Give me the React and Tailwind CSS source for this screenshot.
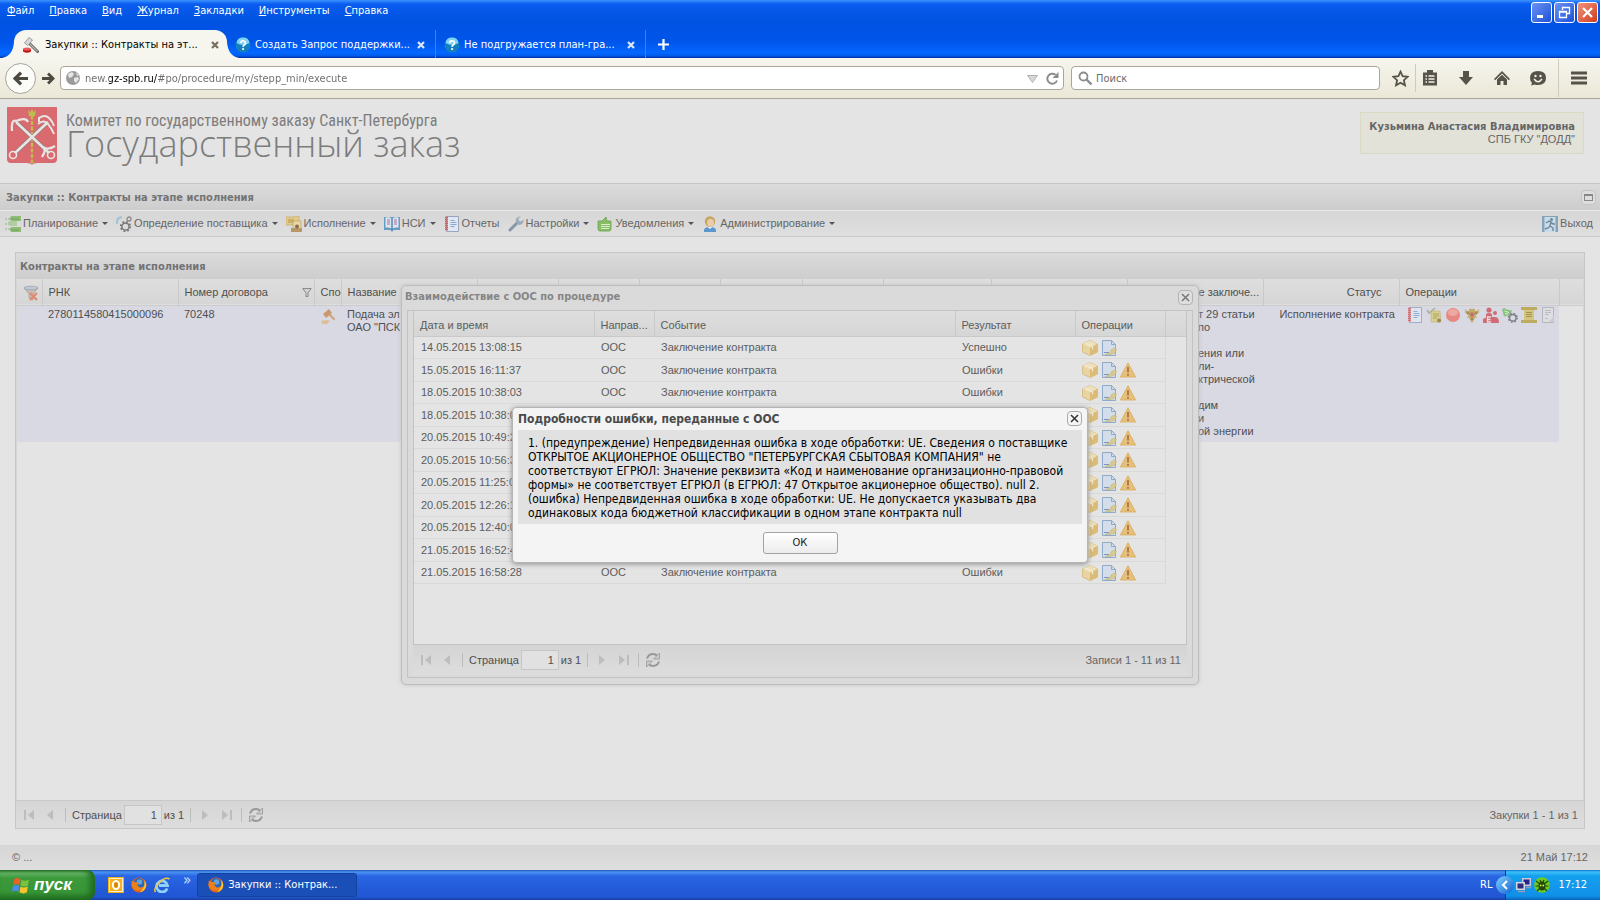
import React, { useState } from 'react'

const browserMenu = ['Файл', 'Правка', 'Вид', 'Журнал', 'Закладки', 'Инструменты', 'Справка']

const events = [
  { date: '14.05.2015 13:08:15', result: 'Успешно' },
  { date: '15.05.2015 16:11:37', result: 'Ошибки' },
  { date: '18.05.2015 10:38:03', result: 'Ошибки' },
  { date: '18.05.2015 10:38:03', result: 'Ошибки' },
  { date: '20.05.2015 10:49:21', result: 'Ошибки' },
  { date: '20.05.2015 10:56:31', result: 'Ошибки' },
  { date: '20.05.2015 11:25:01', result: 'Ошибки' },
  { date: '20.05.2015 12:26:11', result: 'Ошибки' },
  { date: '20.05.2015 12:40:01', result: 'Ошибки' },
  { date: '21.05.2015 16:52:41', result: 'Ошибки' },
  { date: '21.05.2015 16:58:28', result: 'Ошибки' },
]

/* ---------- icons ---------- */

const Icon = ({ size = 'size-4', box = '0 0 16 16', children }) => (
  <svg className={`${size} shrink-0`} viewBox={box} fill="none" aria-hidden="true">
    {children}
  </svg>
)

const HammerIcon = () => (
  <Icon>
    <path d="M7 7l7.500 7.500" stroke="#5f5f5f" strokeWidth="3" strokeLinecap="round" />
    <path d="M7 7l7.500 7.500" stroke="#b8b8b8" strokeWidth="1.200" />
    <path d="M1.500 6l4.500-5.500 3.500 2.500-4.500 5.500z" fill="#d9d9d9" stroke="#8a8a8a" strokeWidth=".8" />
    <path d="M0 12h8v2.500q-4 2.500-8 0z" fill="#c01414" />
    <ellipse cx="4" cy="12" rx="4" ry="1.600" fill="#ec5b5b" />
  </Icon>
)

const HelpBall = () => (
  <Icon>
    <circle cx="8" cy="8" r="7.500" fill="#1480c0" />
    <path d="M1.500 6a6.600 6.600 0 0 1 13 0q-6.500 4-13 0z" fill="#7fd3f5" />
    <path d="M5.800 6q0-2.200 2.300-2.200T10.400 6q0 1.300-1.200 2T8.100 9.800" stroke="#fff" strokeWidth="1.700" />
    <circle cx="8.100" cy="12" r="1.100" fill="#fff" />
  </Icon>
)

const GlobeIcon = () => (
  <Icon>
    <circle cx="8" cy="8" r="7" fill="#9b9b9b" />
    <path d="M3 4l4-2 2 2-2 3-3 1zM9 8l4-1 1 2-3 4-2-2zM11 2l3 3-2 1z" fill="#e6e6e6" />
  </Icon>
)

const FirefoxIcon = () => (
  <Icon>
    <circle cx="8" cy="8" r="7.500" fill="#e4631a" />
    <circle cx="8" cy="6.500" r="5.400" fill="#2a66b8" />
    <circle cx="8.500" cy="5" r="2.800" fill="#5fa3dc" />
    <path d="M.8 3.500q2 1.500 4 1.500l3 1-1.500 2 2 2.200q3 .8 5-1.200-1 4.500-5.500 4.500Q1 13 .5 8z" fill="#ee7f1b" />
    <path d="M13.500 3q2.800 4 1 8-1.500 3.500-5.500 4.200 4-4.200 4.500-7.200z" fill="#f9c733" />
  </Icon>
)

const IeIcon = () => (
  <Icon>
    <path d="M13.200 11.500A5.500 5.500 0 1 1 13.500 8.500H5" stroke="#8fd0ff" strokeWidth="2.800" />
    <path d="M1.500 15Q-1 12.500 5 6T15.500 2" stroke="#f3c63c" strokeWidth="1.500" />
  </Icon>
)

const OutlookIcon = () => (
  <Icon>
    <path d="M0 0h16v16H0z" fill="#f7ae1b" />
    <path d="M1.500 1.500h13v13h-13z" stroke="#fff2c8" />
    <ellipse cx="8" cy="8" rx="3.200" ry="4" stroke="#fff" strokeWidth="2" />
    <ellipse cx="8" cy="8" rx="2" ry="2.800" fill="#d98a00" />
  </Icon>
)

const WindowsFlag = () => (
  <Icon size="size-[19px]" box="0 0 18 18">
    <path d="M3 3q3-2 6 0L8 8.500q-3-2-6 0z" fill="#e8622a" />
    <path d="M10 3.500q3 2 7 0l-1 5.500q-3 2-7 0z" fill="#7cc142" />
    <path d="M1.800 9.500q3-2 6 0L7 15q-3-2-6 0z" fill="#4a8df0" />
    <path d="M9 10q3 2 7 0l-1 5.500q-3 2-7 0z" fill="#f6c52c" />
  </Icon>
)

const PlanIcon = () => (
  <Icon>
    <path d="M0 3h2M3 3h2M0 8h2M3 8h2M0 13h2M3 13h2" stroke="#8fb096" />
    <path d="M5 1l2-1h9v5H7L5 4zM5 12l2-1h9v5H7l-2-1z" fill="#8fbb76" />
    <path d="M3 6l2-1h7v5H5L3 9z" fill="#b1cda2" />
    <path d="M6 14h8M6 3h8" stroke="#72a463" />
  </Icon>
)

const GearsIcon = () => (
  <Icon>
    <path d="M1 8Q0 2 6 1" stroke="#a9c2d3" strokeWidth="2.400" />
    <circle cx="9.500" cy="10.500" r="3.600" stroke="#747474" strokeWidth="1.500" />
    <circle cx="9.500" cy="10.500" r="4.900" stroke="#747474" strokeWidth="1.500" strokeDasharray="1.850 2" />
    <circle cx="13" cy="3" r="2" stroke="#8a8a8a" strokeWidth="1.300" />
  </Icon>
)

const ExecIcon = () => (
  <Icon>
    <path d="M0 1h8l2-1h3v9H0z" fill="#e0cb8f" stroke="#c2a254" strokeWidth=".6" />
    <path d="M2 4h6M2 6h5" stroke="#b99340" />
    <path d="M7 5h8v8H7z" fill="#e6d6a8" stroke="#b79a56" strokeWidth=".6" />
    <path d="M5 12h11v4H5z" fill="#b89868" />
    <circle cx="11" cy="10.500" r="2" fill="#8a6d47" />
  </Icon>
)

const BookIcon = () => (
  <Icon>
    <path d="M0 1h16v13H9.500L8 16l-1.500-2H0z" fill="#679dc4" />
    <path d="M1.500 1.500q4-1 6 1v10q-2-1.500-6-1zM14.500 1.500q-4-1-6 1v10q2-1.500 6-1z" fill="#dfe6ec" />
    <path d="M3 4h3M3 6h3M3 8h3" stroke="#a26fb0" />
    <path d="M10 4h3M10 6h3M10 8h3" stroke="#a26fb0" />
    <path d="M8 2v13" stroke="#4d7fa8" />
  </Icon>
)

const ReportIcon = () => (
  <Icon>
    <path d="M2.500.5h12v15h-12z" fill="#e2e6ee" stroke="#97a6bf" />
    <path d="M1 1.500h3M1 3.500h3M1 5.500h3M1 7.500h3M1 9.500h3M1 11.500h3M1 13.500h3" stroke="#d25f5f" strokeWidth="1.300" />
    <path d="M6.500 4.500h4M6.500 6.500h6M6.500 8.500h6M6.500 10.500h4" stroke="#86a6d6" />
  </Icon>
)

const WrenchIcon = () => (
  <Icon>
    <path d="M2 14L9 7" stroke="#8698a8" strokeWidth="3" strokeLinecap="round" />
    <path d="M15.500 3.500L13 5.500l-2.200-.8L10.500 2.500 12.800.5Q9 0 8 3T10 8.200 15.500 6z" fill="#9aabb9" />
  </Icon>
)

const NoticeIcon = () => (
  <Icon>
    <path d="M1 5h4l4-4 1 4h4v8q0 2-2 2H3q-2 0-2-2z" fill="#86bd66" stroke="#69a352" strokeWidth=".8" />
    <path d="M4 8.500h9M4 10.500h9M4 12.500h8" stroke="#dcebcb" />
  </Icon>
)

const UserIcon = () => (
  <Icon>
    <path d="M2 16q-1-5 6-5t6 5z" fill="#5c97cf" />
    <path d="M5.500 11h5L8 13z" fill="#e9eef4" />
    <circle cx="8" cy="5.500" r="5.200" fill="#c9a35e" />
    <ellipse cx="8.500" cy="6.800" rx="3.500" ry="4" fill="#e8cbaa" />
  </Icon>
)

const ExitIcon = () => (
  <Icon>
    <path d="M0 0h16v16H0z" fill="#88a3b7" />
    <path d="M2.500 1h11v15h-11z" fill="#c9dcea" />
    <circle cx="9.500" cy="3.500" r="1.500" fill="#6c8799" />
    <path d="M4 7l3-2 2 1-1 4 3 2v3M8 10l-2 2-3 1M9 6l2 2h2" stroke="#6c8799" strokeWidth="1.400" />
  </Icon>
)

const ClearFilterIcon = () => (
  <Icon>
    <path d="M1 3q7 3 14 0l-5 6v6l-4-2V9z" fill="#c5bdb6" stroke="#a39c97" strokeWidth=".7" />
    <ellipse cx="8" cy="3" rx="7" ry="1.800" fill="#b9cbdc" stroke="#a39c97" strokeWidth=".7" />
    <path d="M7 8l7 7M14 8l-7 7" stroke="#df8a72" strokeWidth="2.400" />
  </Icon>
)

const FunnelIcon = () => (
  <Icon size="size-[10px]" box="0 0 10 10">
    <path d="M.8.500h8.400L6 5v3.500H4V5z" fill="#d0d0d0" stroke="#8b8b8b" />
  </Icon>
)

const GavelIcon = () => (
  <Icon>
    <path d="M8 5l6 6" stroke="#cfa57c" strokeWidth="2.200" strokeLinecap="round" />
    <path d="M3 6l6-5 3 4-6 5z" fill="#c9986f" />
    <path d="M1 13l6-1 3 1-3 3H2z" fill="#dcbf99" />
  </Icon>
)

const TaskIcon = () => (
  <Icon>
    <path d="M5 4h9l1 11H5z" fill="#d8cd7f" stroke="#b9ac60" strokeWidth=".6" />
    <path d="M7 7h6M7 9h6M7 11h4" stroke="#a89b55" />
    <path d="M1 3l2 3 6-5" stroke="#a5a98f" strokeWidth="1.600" />
    <circle cx="13" cy="13.500" r="2" fill="#8f7d3a" />
  </Icon>
)

const StopIcon = () => (
  <Icon>
    <circle cx="8" cy="8" r="7" fill="#ea7b6f" />
    <ellipse cx="8" cy="5.500" rx="5" ry="3.500" fill="#f0a097" />
  </Icon>
)

const EagleIcon = () => (
  <Icon>
    <path d="M5 8Q1 8 .8 2q2 2.500 4.200 2Q4.500 1 7 1.500l1 1 1-1q2.500-.5 2 2.500 2.200.5 4.200-2Q15 8 11 8l2.500 3-2.500-.5L10 13l-2 3-2-3-1-2.500-2.500.5z" fill="#c0a556" />
    <path d="M2.500 5l2 2.500M4 4.500l1.500 3M13.500 5l-2 2.500M12 4.500l-1.500 3M7 13l1-2 1 2" stroke="#7d6a45" strokeWidth=".8" />
    <path d="M6.500 5.500h3v3.500L8 10.500 6.500 9z" fill="#c5574b" />
  </Icon>
)

const PeopleIcon = () => (
  <Icon>
    <circle cx="6" cy="3" r="2.600" fill="#cf5a63" />
    <circle cx="12" cy="6" r="2" fill="#cf5a63" />
    <path d="M0 16v-4l3-1.500V7q3-2 6 0v3h3.500Q16 10 16 16z" fill="#cf5a63" />
    <path d="M8 10H4.500v5H8M4.500 12.500h3" stroke="#f2dcdf" strokeWidth="1.300" />
  </Icon>
)

const ProcessIcon = () => (
  <Icon>
    <path d="M0 2l3-1v1l7 1.500L8 8 2 9.500z" fill="#7dbd70" />
    <path d="M2.500 4l4.500 1.500M3 6.500l3 .5" stroke="#dcefd6" />
    <circle cx="10.800" cy="10.800" r="3.300" stroke="#6b727b" strokeWidth="1.500" />
    <circle cx="10.800" cy="10.800" r="4.500" stroke="#6b727b" strokeWidth="1.200" strokeDasharray="1.770 1.770" />
  </Icon>
)

const ScrollIcon = () => (
  <Icon>
    <path d="M3 2h10v12H3z" fill="#d3c36a" />
    <path d="M0 0h16v3H0zM0 13h16v3H0z" fill="#b9a548" />
    <path d="M5 5.500h6M5 7.500h6M5 9.500h6" stroke="#9a8838" />
  </Icon>
)

const PageIcon = () => (
  <Icon>
    <path d="M2.500.5h11v15h-11z" fill="#dfe0e2" stroke="#aeb2b8" />
    <path d="M5 3.500h6M5 5.500h6M5 7.500h4M5 11.500h3" stroke="#b3b8be" />
    <path d="M9 15l5-6v6z" fill="#c6cacf" />
  </Icon>
)

const PackageIcon = () => (
  <Icon>
    <path d="M8 .5L15.500 4v8L8 15.500.5 12V4z" fill="#e8d4a3" stroke="#d3b774" strokeWidth=".8" />
    <path d="M.5 4L8 7.500 15.500 4 8 .5z" fill="#ecdfbb" />
    <path d="M8 7.500L15.500 4v8L8 15.500z" fill="#dabb77" />
    <path d="M3 2.800l7.500 3.500v3" stroke="#f3ead0" strokeWidth="1.300" />
  </Icon>
)

const SignIcon = () => (
  <Icon>
    <path d="M1.500.5h9l4 4v11h-13z" fill="#d3deea" stroke="#8fa9c8" />
    <path d="M10.500.5v4h4" stroke="#8fa9c8" />
    <path d="M3 12.500h5" stroke="#7c96b8" />
    <path d="M4 14.500l5-1.500 1-3 3-2 2.500 1.500-2.500 4-4 1z" fill="#d9ca90" stroke="#c4b678" strokeWidth=".6" />
  </Icon>
)

const WarnIcon = () => (
  <Icon>
    <path d="M8 .8L15.600 15H.4z" fill="#e6c07a" stroke="#d9ab5c" strokeWidth=".8" strokeLinejoin="round" />
    <path d="M8 5v5.500M8 12v1.800" stroke="#a5703f" strokeWidth="1.700" />
  </Icon>
)

const RefreshIcon = () => (
  <Icon>
    <path d="M2 6.500Q3.500 2 8 2q2.500 0 4.500 2M14 9.500Q12.500 14 8 14q-2.500 0-4.500-2" stroke="#989898" strokeWidth="2" />
    <path d="M14.500 1v6h-6zM1.500 15V9h6z" fill="#cacaca" stroke="#989898" strokeWidth=".8" />
  </Icon>
)

/* ---------- browser window ---------- */

const TabFlare = ({ right }) => (
  <svg
    className={right ? 'absolute -right-3 bottom-0 h-4 w-3' : 'absolute -left-3 bottom-0 h-4 w-3'}
    viewBox="0 0 12 16"
    aria-hidden="true"
  >
    <path d={right ? 'M0 0q1 14 12 16H0z' : 'M12 0q-1 14-12 16h12z'} fill="#f6f5ee" />
  </svg>
)

const TabClose = ({ dark }) => (
  <button type="button" aria-label="Закрыть вкладку" className="p-0.5">
    <Icon size="size-2" box="0 0 8 8">
      <path d="M1 1l6 6M7 1L1 7" stroke={dark ? '#77705f' : '#dbe8ff'} strokeWidth="2.200" />
    </Icon>
  </button>
)

const CaptionButton = ({ label, close, children }) => (
  <button
    type="button"
    aria-label={label}
    className={
      close
        ? 'flex size-[21px] items-center justify-center rounded-[3px] border border-white bg-gradient-to-br from-[#f0917a] to-[#cf3a12]'
        : 'flex size-[21px] items-center justify-center rounded-[3px] border border-white bg-gradient-to-br from-[#6b93f2] to-[#1d4fd8]'
    }
  >
    <Icon size="size-[15px]" box="0 0 15 15">
      {children}
    </Icon>
  </button>
)

const BrowserTop = () => {
  const [url, setUrl] = useState('new.gz-spb.ru/#po/procedure/my/stepp_min/execute')
  const [search, setSearch] = useState('')

  return (
    <header className="font-['DejaVu_Sans_Condensed','DejaVu_Sans',sans-serif] text-[11px]">
      <div className="flex h-[58px] flex-col justify-between bg-[linear-gradient(180deg,#3b94ff_0,#0a5df0_4px,#0052e0_20px,#0055ea_42px,#0468ff_53px,#0058e8_56px,#002f9c_58px)]">
        <div className="flex justify-between">
          <nav className="flex gap-[15px] pt-1 pl-[7px] leading-[14px] text-white">
            {browserMenu.map((m) => (
              <button type="button" key={m} className="h-[14px] first-letter:underline">
                {m}
              </button>
            ))}
          </nav>
          <div className="flex gap-0.5 pt-0.5 pr-0.5">
            <CaptionButton label="Свернуть">
              <path d="M3 10h6v3H3z" fill="#fff" />
            </CaptionButton>
            <CaptionButton label="Восстановить">
              <path d="M5.500 5V2.500h7v6H10M5 2.500h8M2.500 6.500h7v6h-7zM2 7h8" stroke="#fff" strokeWidth="1.300" />
            </CaptionButton>
            <CaptionButton label="Закрыть" close>
              <path d="M3 3l9 9M12 3l-9 9" stroke="#fff" strokeWidth="2.200" />
            </CaptionButton>
          </div>
        </div>
        <div className="flex h-7 items-stretch pl-[14px] text-white">
          <div className="relative flex w-[213px] items-center gap-1.5 rounded-t-xl bg-[#f6f5ee] pt-0.5 pl-[9px] text-black">
            <TabFlare />
            <HammerIcon />
            <span className="grow">Закупки :: Контракты на эт...</span>
            <TabClose dark />
            <span />
            <TabFlare right />
          </div>
          <div className="flex w-[209px] items-center gap-1 border-r border-[#4a7fd6] pt-0.5 pl-2">
            <HelpBall />
            <span className="grow">Создать Запрос поддержки...</span>
            <TabClose />
            <span className="w-1" />
          </div>
          <div className="flex w-[210px] items-center gap-1 border-r border-[#4a7fd6] pt-0.5 pl-2">
            <HelpBall />
            <span className="grow">Не подгружается план-гра...</span>
            <TabClose />
            <span className="w-1" />
          </div>
          <button type="button" aria-label="Новая вкладка" className="px-3">
            <Icon size="size-[11px]" box="0 0 11 11">
              <path d="M5.500 0v11M0 5.500h11" stroke="#fff" strokeWidth="2.200" />
            </Icon>
          </button>
        </div>
      </div>

      <div className="flex h-[41px] items-center border-b border-[#a9a69a] bg-gradient-to-b from-[#f6f5ee] to-[#ebe8d7] pl-[5px]">
        <button
          type="button"
          aria-label="Назад"
          className="flex size-[31px] items-center justify-center rounded-full border border-[#a5a499] bg-[#fbfbf8]"
        >
          <Icon size="size-[15px]" box="0 0 14 14">
            <path d="M7.500 1.500L2 7l5.500 5.500M2 7h12" stroke="#4c4a40" strokeWidth="3" />
          </Icon>
        </button>
        <button type="button" aria-label="Вперёд" className="flex w-6 justify-center">
          <Icon size="size-[13px]" box="0 0 14 14">
            <path d="M6.500 1.500L12 7l-5.500 5.500M12 7H0" stroke="#4c4a40" strokeWidth="3" />
          </Icon>
        </button>
        <div className="flex h-6 grow items-center gap-1 rounded-sm border border-[#a9a79b] bg-white px-1">
          <GlobeIcon />
          <input
            aria-label="Адрес"
            value={url}
            onChange={(e) => setUrl(e.target.value)}
            className="grow bg-[linear-gradient(90deg,#6b6b6b_24px,#000_24px,#000_72px,#6b6b6b_72px)] bg-clip-text pt-0.5 text-transparent outline-none"
          />
          <Icon size="size-[11px]" box="0 0 11 11">
            <path d="M.5 2.500h10l-5 7z" fill="#d8d8d8" stroke="#b2b2b2" />
          </Icon>
          <button type="button" aria-label="Обновить" className="ml-1">
            <Icon size="size-[13px]" box="0 0 13 13">
              <path d="M11 8.500A5 5 0 1 1 9.500 2.800" stroke="#8c8c8c" strokeWidth="2" />
              <path d="M12.500 0v6h-6z" fill="#8c8c8c" />
            </Icon>
          </button>
        </div>
        <label className="ml-[7px] flex h-6 w-[309px] items-center gap-1 rounded-sm border border-[#a9a79b] bg-white px-1.5">
          <Icon size="size-[14px]" box="0 0 14 14">
            <circle cx="5.500" cy="5.500" r="4" stroke="#8c8c8c" strokeWidth="1.800" />
            <path d="M8.500 8.500l5 5" stroke="#8c8c8c" strokeWidth="2.400" />
          </Icon>
          <input
            aria-label="Поиск"
            placeholder="Поиск"
            value={search}
            onChange={(e) => setSearch(e.target.value)}
            className="grow pt-0.5 outline-none placeholder:text-[#6b6b6b]"
          />
        </label>
        <div className="flex items-center pl-3 text-[#55534a]">
          <button type="button" aria-label="Добавить закладку">
            <Icon size="size-[17px]" box="0 0 16 16">
              <path d="M8 1.500l2 4.400 4.700.5-3.500 3.200 1 4.800L8 12l-4.200 2.400 1-4.800L1.300 6.400 6 5.900z" stroke="currentColor" strokeWidth="1.700" />
            </Icon>
          </button>
          <span className="mx-1.5 h-7 w-px bg-[#cfccbd]" />
          <button type="button" aria-label="Закладки">
            <Icon>
              <path d="M1 2.500h14v13H1z" fill="currentColor" />
              <path d="M5 0h6v4H5z" fill="currentColor" />
              <path d="M3.500 6h1.500M6.500 6h6M3.500 9h1.500M6.500 9h6M3.500 12h1.500M6.500 12h6" stroke="#f4f2e8" strokeWidth="1.500" />
            </Icon>
          </button>
          <button type="button" aria-label="Загрузки" className="ml-5">
            <Icon>
              <path d="M5 1h6v6h4l-7 8-7-8h4z" fill="currentColor" />
            </Icon>
          </button>
          <button type="button" aria-label="Домой" className="ml-5">
            <Icon>
              <path d="M8 1l8 8-1.200 1.200L8 3.500l-6.800 6.700L0 9z" fill="currentColor" />
              <path d="M3 9.500l5-4.800 5 4.800V15H9.500v-4h-3v4H3z" fill="currentColor" />
            </Icon>
          </button>
          <button type="button" aria-label="Чат" className="ml-5">
            <Icon>
              <path d="M8 1q8 0 8 7t-8 7q-2 0-3-.5L1 15.500 2 13Q0 11 0 8q0-7 8-7z" fill="currentColor" />
              <path d="M4 9q4 5.500 8 0" stroke="#f2f0e5" strokeWidth="1.500" />
              <circle cx="5.500" cy="6" r="1.200" fill="#f2f0e5" />
              <circle cx="10.500" cy="6" r="1.200" fill="#f2f0e5" />
            </Icon>
          </button>
          <span className="mr-3 ml-3 h-[38px] w-px bg-[#cfccbd]" />
          <button type="button" aria-label="Меню" className="mr-[13px]">
            <Icon>
              <path d="M0 3h16M0 8h16M0 13h16" stroke="currentColor" strokeWidth="3" />
            </Icon>
          </button>
        </div>
      </div>
    </header>
  )
}

/* ---------- page ---------- */

const Emblem = () => (
  <svg className="h-[58px] w-[50px]" viewBox="0 0 50 58" fill="none" aria-hidden="true">
    <path d="M0 0h50v52q0 4-4 4H31q-5 0-6 2-1-2-6-2H4q-4 0-4-4z" fill="#d96a70" />
    <path d="M25 3v54" stroke="#c7b84a" strokeWidth="2.400" strokeDasharray="4 1.500" />
    <path d="M21 3q4 5 8 0l-1 6h-6z" fill="#b9bf4e" />
    <path d="M9 15L42 46M41 15L8 46" stroke="#8f8080" strokeWidth="4" />
    <path d="M9 15L42 46M41 15L8 46" stroke="#e8e5e2" strokeWidth="2.600" />
    <path d="M5 24q-1-12 4-10 10-4 12 1" stroke="#e8e5e2" strokeWidth="2.200" />
    <path d="M32 11q6-4 10 0t5 8M31 17q6-5 10 0t6 10M32 10v5" stroke="#e8e5e2" strokeWidth="2" />
    <circle cx="6" cy="48" r="3.500" stroke="#e8e5e2" strokeWidth="1.600" />
    <circle cx="44" cy="48" r="3.500" stroke="#e8e5e2" strokeWidth="1.600" />
    <path d="M35 50q3-4 3-9 4 2 10-2" stroke="#e8e5e2" strokeWidth="2.200" />
  </svg>
)

const MenuItem = ({ icon, caret = true, children }) => (
  <button type="button" className="flex items-center gap-0.5">
    {icon}
    {children}
    {caret && (
      <svg className="ml-0.5 h-[3px] w-[6px]" viewBox="0 0 6 3" aria-hidden="true">
        <path d="M0 0h6L3 3z" fill="#555" />
      </svg>
    )}
  </button>
)

const PagerButton = ({ label, d }) => (
  <button type="button" aria-label={label} disabled>
    <Icon>
      <path d={d} fill="#bdbdbd" />
    </Icon>
  </button>
)

const Pager = ({ id, total }) => {
  const [page, setPage] = useState('1')
  return (
    <div className="flex grow items-center gap-1.5 pt-px pl-[5px] text-[#4f4f4f]">
      <PagerButton label="Первая" d="M3 3h2v10H3zM13 3v10L7 8z" />
      <PagerButton label="Предыдущая" d="M10 3v10L4 8z" />
      <span className="h-[14px] w-px bg-[#bcbcbc]" />
      <div className="flex items-center gap-0.5">
        <label htmlFor={id}>Страница</label>
        <input
          id={id}
          value={page}
          onChange={(e) => setPage(e.target.value)}
          className="h-5 w-[38px] border border-[#c6c6c6] bg-[#e1e1e1] px-1 text-right"
        />
        <span>из 1</span>
      </div>
      <span className="h-[14px] w-px bg-[#bcbcbc]" />
      <PagerButton label="Следующая" d="M5 3v10l6-5z" />
      <PagerButton label="Последняя" d="M11 3h2v10h-2zM3 3v10l6-5z" />
      <span className="h-[14px] w-px bg-[#bcbcbc]" />
      <button type="button" aria-label="Обновить список">
        <RefreshIcon />
      </button>
      <span className="grow pr-1.5 text-right text-[#666]">{total}</span>
    </div>
  )
}

const Th = ({ className = '', children }) => (
  <th
    className={`overflow-hidden border-r border-[#c9c9c9] px-1.5 pt-0.5 text-left font-normal whitespace-nowrap shadow-[1px_0_0_#e9e9e9] ${className}`}
  >
    {children}
  </th>
)

const ContractsTable = () => (
  <table className="w-full table-fixed leading-[13px] text-[#4f4f4f]">
    <colgroup>
      <col className="w-[25px]" />
      <col className="w-[136px]" />
      <col className="w-[136px]" />
      <col className="w-[27px]" />
      <col className="w-[136px]" />
      <col className="w-[81px]" />
      <col className="w-[81px]" />
      <col className="w-[81px]" />
      <col className="w-[82px]" />
      <col className="w-[81px]" />
      <col className="w-[108px]" />
      <col className="w-[136px]" />
      <col className="w-[136px]" />
      <col className="w-[136px]" />
      <col className="w-[160px]" />
      <col />
    </colgroup>
    <thead>
      <tr className="h-[26px] border-b border-[#cccccc] bg-gradient-to-b from-[#dedede] to-[#d6d6d6]">
        <Th>
          <div className="-mr-1.5 flex">
            <ClearFilterIcon />
          </div>
        </Th>
        <Th>РНК</Th>
        <Th>
          <div className="-mr-1 flex items-center justify-between">
            Номер договора
            <FunnelIcon />
          </div>
        </Th>
        <Th>Способ</Th>
        <Th>Название</Th>
        <Th />
        <Th />
        <Th />
        <Th />
        <Th />
        <Th />
        <Th />
        <Th className="pl-[71px]">е заключе...</Th>
        <Th>
          <div className="pr-[11px] text-right">Статус</div>
        </Th>
        <Th>Операции</Th>
        <th />
      </tr>
    </thead>
    <tbody>
      <tr className="h-[137px] align-top">
        <td className="bg-[#d9d9e4]" />
        <td className="bg-[#d9d9e4] px-1.5 pt-0.5">2780114580415000096</td>
        <td className="bg-[#d9d9e4] px-1.5 pt-0.5">70248</td>
        <td className="bg-[#d9d9e4] px-1.5 pt-0.5">
          <GavelIcon />
        </td>
        <td className="bg-[#d9d9e4] px-1.5 pt-0.5">
          Подача эл
          <br />
          ОАО "ПСК
        </td>
        <td colSpan="7" className="bg-[#d9d9e4]" />
        <td className="bg-[#d9d9e4] pt-0.5 pl-[71px] whitespace-pre">
          {'т 29 статьи\nпо\n\nения или\nли-\nктрической\n\nдим\nи\nой энергии'}
        </td>
        <td className="bg-[#d9d9e4] px-1 pt-0.5 text-right">Исполнение контракта</td>
        <td className="bg-[#d9d9e4] px-2 pt-px">
          <div className="flex gap-[3px] opacity-85">
            <ReportIcon />
            <TaskIcon />
            <StopIcon />
            <EagleIcon />
            <PeopleIcon />
            <ProcessIcon />
            <ScrollIcon />
            <PageIcon />
          </div>
        </td>
        <td />
      </tr>
    </tbody>
  </table>
)

const CloseBox = ({ label, dark }) => (
  <button
    type="button"
    aria-label={label}
    className={
      dark
        ? 'flex size-[15px] items-center justify-center rounded-sm border border-[#a9a9a9] bg-[#f4f4f4] text-[#333]'
        : 'flex size-[15px] items-center justify-center rounded-sm border border-[#b4b4b4] bg-[#dedede] text-[#777]'
    }
  >
    <Icon size="size-[9px]" box="0 0 9 9">
      <path d="M1 1l7 7M8 1L1 8" stroke="currentColor" strokeWidth="1.500" />
    </Icon>
  </button>
)

const EventsWindow = () => (
  <section className="flex w-[798px] flex-col rounded-[5px] border border-[#bdbdbd] bg-[#dadada] px-[5px] pb-[6px] shadow-[0_0_4px_#c4c4c4] [grid-area:1/1]">
    <div className="-ml-0.5 flex h-6 items-center justify-between">
      <h2 className="font-['DejaVu_Sans_Condensed','DejaVu_Sans',sans-serif] font-bold text-[#868686]">
        Взаимодействие с ООС по процедуре
      </h2>
      <CloseBox label="Закрыть окно" />
    </div>
    <div className="border border-[#c3c3c3] px-[5px] pb-[2px]">
      <div className="h-[334px] border-x border-b border-[#c3c3c3] bg-[#e4e4e4]">
        <table className="w-full table-fixed text-[#5c5c5c]">
          <colgroup>
            <col className="w-[180px]" />
            <col className="w-[60px]" />
            <col className="w-[301px]" />
            <col className="w-[120px]" />
            <col className="w-[90px]" />
            <col />
          </colgroup>
          <thead>
            <tr className="h-[26px] border-b border-[#c9c9c9] bg-gradient-to-b from-[#dedede] to-[#d6d6d6]">
              <Th className="pt-1">Дата и время</Th>
              <Th className="pt-1">Направ...</Th>
              <Th className="pt-1">Событие</Th>
              <Th className="pt-1">Результат</Th>
              <Th className="pt-1">Операции</Th>
              <th />
            </tr>
          </thead>
          <tbody>
            {events.map((ev, i) => (
              <tr key={i} className="odd:h-[22px] even:h-[23px]">
                <td className="border-b border-[#d9d9d9] px-[7px]">{ev.date}</td>
                <td className="border-b border-[#d9d9d9] px-[7px]">ООС</td>
                <td className="border-b border-[#d9d9d9] px-[7px]">Заключение контракта</td>
                <td className="border-b border-[#d9d9d9] px-[7px]">{ev.result}</td>
                <td className="border-r border-b border-[#d9d9d9] px-[7px]">
                  <div className="flex gap-[3px]">
                    <PackageIcon />
                    <SignIcon />
                    {ev.result === 'Ошибки' && <WarnIcon />}
                  </div>
                </td>
                <td />
              </tr>
            ))}
          </tbody>
        </table>
      </div>
      <div className="flex h-[30px] bg-gradient-to-b from-[#d4d4d4] to-[#dddddd]">
        <Pager id="events-page" total="Записи 1 - 11 из 11" />
      </div>
    </div>
  </section>
)

const ErrorMessage = () => (
  <section
    role="dialog"
    aria-labelledby="error-title"
    className="z-10 flex w-[576px] flex-col rounded-[4px] border border-[#b5b5b5] bg-[#f4f4f4] px-[5px] font-['DejaVu_Sans_Condensed','DejaVu_Sans',sans-serif] text-[12px] shadow-[0_1px_5px_#8c8c8c] [grid-area:1/1]"
  >
    <div className="flex h-[22px] items-center justify-between">
      <h2 id="error-title" className="font-bold text-[#4a4a4a]">
        Подробности ошибки, переданные с ООС
      </h2>
      <CloseBox label="Закрыть сообщение" dark />
    </div>
    <p className="bg-[#e1e1e1] pt-1.5 pr-[8px] pb-1 pl-[10px] leading-[14px] text-black">
      1. (предупреждение) Непредвиденная ошибка в ходе обработки: UE. Сведения о поставщике ОТКРЫТОЕ АКЦИОНЕРНОЕ
      ОБЩЕСТВО "ПЕТЕРБУРГСКАЯ СБЫТОВАЯ КОМПАНИЯ" не соответствуют ЕГРЮЛ: Значение реквизита «Код и наименование
      организационно-правовой формы» не соответствует ЕГРЮЛ (в ЕГРЮЛ: 47 Открытое акционерное общество). null 2.
      (ошибка) Непредвиденная ошибка в ходе обработки: UE. Не допускается указывать два одинаковых кода бюджетной
      классификации в одном этапе контракта null
    </p>
    <div className="flex justify-center pt-2 pb-2">
      <button
        type="button"
        className="h-[22px] w-[75px] rounded-[3px] border border-[#a3a3a3] bg-gradient-to-b from-white to-[#ececec] pt-0.5 text-[11px] text-[#222]"
      >
        ОК
      </button>
    </div>
  </section>
)

const Taskbar = () => (
  <footer className="flex h-[30px] items-stretch bg-[linear-gradient(180deg,#1f52b5_0,#4a93f5_2px,#2a66e3_6px,#2359d8_20px,#2157d4_27px,#173f9e_30px)] font-['DejaVu_Sans_Condensed','DejaVu_Sans',sans-serif] text-[11px] text-white">
    <button
      type="button"
      className="flex w-[95px] items-center gap-1 rounded-r-lg bg-[linear-gradient(180deg,#2f7d32_0,#6ab86a_3px,#3c9a3c_8px,#379437_22px,#216e22_30px)] pl-[11px] font-['Liberation_Sans',sans-serif] text-[17px] font-bold italic shadow-[inset_-5px_0_6px_#1f6b20]"
    >
      <WindowsFlag />
      пуск
    </button>
    <div className="flex items-center gap-[7px] pl-[13px]">
      <OutlookIcon />
      <FirefoxIcon />
      <IeIcon />
      <span className="self-start pt-0.5 pl-1.5 text-[15px] leading-4 text-[#cfe0ff]">»</span>
    </div>
    <button
      type="button"
      className="my-[3px] ml-1.5 flex w-[160px] items-center gap-1 rounded-[3px] border border-[#15419c] bg-[#1b4fb8] pl-2.5"
    >
      <FirefoxIcon />
      Закупки :: Контрак...
    </button>
    <span className="grow" />
    <span className="flex items-center pr-[13px]">RL</span>
    <div className="flex items-center gap-0.5 border-l border-[#0c3d96] bg-[linear-gradient(180deg,#0f6fd0_0,#3cc0f8_2px,#14a0ee_6px,#1090e8_26px,#0b62b8_30px)] pr-[13px]">
      <button
        type="button"
        aria-label="Показать скрытые значки"
        className="-ml-2.5 flex size-[18px] items-center justify-center rounded-full bg-gradient-to-br from-[#7fd0ff] to-[#0c62cf]"
      >
        <Icon size="size-2.5" box="0 0 10 10">
          <path d="M7 1L3 5l4 4" stroke="#fff" strokeWidth="2" />
        </Icon>
      </button>
      <Icon>
        <path d="M6 1h9v8H6z" fill="#c6c8d8" />
        <path d="M7.500 2.500h6v5h-6z" fill="#24248a" />
        <path d="M0 5h9v8H0z" fill="#d2d4e2" />
        <path d="M1.500 6.500h6v5h-6z" fill="#2d2d7a" />
        <path d="M2 14.500h7M10 10.500h5" stroke="#9a9cb4" strokeWidth="1.500" />
      </Icon>
      <Icon>
        <circle cx="8" cy="8" r="7.800" fill="#6ecb1c" />
        <ellipse cx="8" cy="9" rx="3.500" ry="4.500" fill="#24480c" />
        <path d="M2 4l4 3M14 4l-4 3M1.500 9h13M3 14l3-3M13 14l-3-3M6 3l1 2M10 3L9 5" stroke="#24480c" strokeWidth="1.200" />
        <circle cx="6.700" cy="8.500" r=".9" fill="#c9ef4b" />
        <circle cx="9.300" cy="8.500" r=".9" fill="#c9ef4b" />
      </Icon>
      <span className="pl-1.5">17:12</span>
    </div>
  </footer>
)

export default function App() {
  return (
    <div className="flex min-h-screen flex-col bg-[#e4e4e4] font-['Liberation_Sans',Arial,sans-serif] text-[11px]">
      <BrowserTop />

      <main className="relative flex grow flex-col">
        <div className="flex h-[84px] items-start justify-between pr-4 pl-[7px]">
          <div className="flex gap-[9px] pt-2">
            <Emblem />
            <div>
              <p className="pt-1 font-['Roboto_Condensed','Open_Sans_Condensed',sans-serif] text-[16px] leading-5 text-[#7c7c7c]">
                Комитет по государственному заказу Санкт-Петербурга
              </p>
              <h1 className="font-['Open_Sans',sans-serif] text-[36px] leading-[26px] font-light text-[#7c7c7c]">
                Государственный заказ
              </h1>
            </div>
          </div>
          <div className="mt-[13px] h-[42px] border border-[#dadac4] bg-[#e2e2d9] px-2 pt-[7px] text-right leading-[13px] text-[#666]">
            <p className="font-['DejaVu_Sans_Condensed','DejaVu_Sans',sans-serif] font-bold">
              Кузьмина Анастасия Владимировна
            </p>
            <p>СПБ ГКУ "ДОДД"</p>
          </div>
        </div>

        <div className="flex h-7 items-center justify-between border-y border-t-[#c6c6c6] border-b-[#ececec] bg-gradient-to-b from-[#dbdbdb] to-[#cdcdcd] pr-1 pl-1.5">
          <h2 className="pt-0.5 font-['DejaVu_Sans_Condensed','DejaVu_Sans',sans-serif] font-bold text-[#737373]">
            Закупки :: Контракты на этапе исполнения
          </h2>
          <button
            type="button"
            aria-label="Развернуть"
            className="flex size-[15px] items-center justify-center rounded-sm border border-[#c4c4c4] bg-[#dedede]"
          >
            <span className="h-[7px] w-[9px] border border-t-2 border-[#888]" />
          </button>
        </div>

        <nav className="flex h-[26px] items-center gap-2 border-b border-[#c9c9c9] bg-gradient-to-b from-[#d6d6d6] to-[#dfdfdf] pr-[7px] pl-[5px] text-[#666]">
          <MenuItem icon={<PlanIcon />}>Планирование</MenuItem>
          <MenuItem icon={<GearsIcon />}>Определение поставщика</MenuItem>
          <MenuItem icon={<ExecIcon />}>Исполнение</MenuItem>
          <MenuItem icon={<BookIcon />}>НСИ</MenuItem>
          <MenuItem icon={<ReportIcon />} caret={false}>
            Отчеты
          </MenuItem>
          <MenuItem icon={<WrenchIcon />}>Настройки</MenuItem>
          <MenuItem icon={<NoticeIcon />}>Уведомления</MenuItem>
          <MenuItem icon={<UserIcon />}>Администрирование</MenuItem>
          <span className="grow" />
          <MenuItem icon={<ExitIcon />} caret={false}>
            Выход
          </MenuItem>
        </nav>

        <section className="mx-[15px] mt-[15px] mb-4 flex grow flex-col border border-[#c6c6c6]">
          <h2 className="flex h-[26px] items-center bg-gradient-to-b from-[#dbdbdb] to-[#cdcdcd] pt-0.5 pl-1 font-['DejaVu_Sans_Condensed','DejaVu_Sans',sans-serif] font-bold text-[#737373]">
            Контракты на этапе исполнения
          </h2>
          <div className="grow overflow-hidden border-x border-[#d6d6d6]">
            <ContractsTable />
          </div>
          <div className="flex h-7 border-t border-[#c9c9c9] bg-gradient-to-b from-[#d6d6d6] to-[#dddddd]">
            <Pager id="contracts-page" total="Закупки 1 - 1 из 1" />
          </div>
        </section>

        <div className="flex h-[25px] items-center justify-between bg-gradient-to-b from-[#d6d6d6] to-[#dedede] px-3 text-[#666]">
          <span>© ...</span>
          <span>21 Май 17:12</span>
        </div>

        <div className="absolute inset-0 grid place-items-center">
          <EventsWindow />
          <ErrorMessage />
        </div>
      </main>

      <Taskbar />
    </div>
  )
}
